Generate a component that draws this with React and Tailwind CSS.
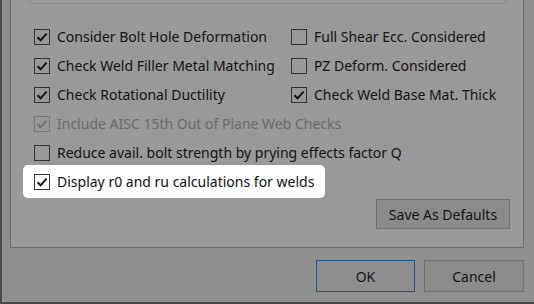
import React from 'react';

const font = { fontFamily: '"Noto Sans", "Open Sans", sans-serif' };

function Check({ on, disabled, bright }) {
  const border = disabled ? 'border-[#777]' : 'border-[#333]';
  const bg = bright ? 'bg-white' : 'bg-transparent';
  const stroke = disabled ? '#6f6f6f' : '#111';
  return (
    <div className={`w-[16px] h-[16px] border ${border} ${bg} flex items-center justify-center shrink-0`}>
      {on && (
        <svg width="12" height="12" viewBox="0 0 12 12">
          <path d="M1.5 6.2 L4.6 9.3 L10.6 2.6" fill="none" stroke={stroke} strokeWidth="2" />
        </svg>
      )}
    </div>
  );
}

function Row({ label, on, disabled }) {
  return (
    <div className="h-[29px] flex items-center gap-[7px]">
      <Check on={on} disabled={disabled} />
      <span className={`text-[14px] leading-none whitespace-nowrap ${disabled ? 'text-[#6a6a6a]' : 'text-[#141414]'}`}>{label}</span>
    </div>
  );
}

export default function App() {
  const left = [
    ['Consider Bolt Hole Deformation', true],
    ['Check Weld Filler Metal Matching', true],
    ['Check Rotational Ductility', true],
  ];
  const right = [
    ['Full Shear Ecc. Considered', false],
    ['PZ Deform. Considered', false],
    ['Check Weld Base Mat. Thick', true],
  ];

  return (
    <div style={font} className="w-[534px] h-[304px] bg-[#8f8f8f] border-l-2 border-b-2 border-[#4a4a4a] overflow-hidden">
      <div className="ml-[8px] w-[514px] h-[248px] border border-t-0 border-[#6c6c6c] bg-[#999999]">
        <div className="ml-[17px] w-[479px] h-[4px] border border-t-0 border-[#8a8a8a] rounded-b-[4px]" />
        <div className="pt-[18px] pl-[23px]">
          <div className="grid grid-cols-[257px_1fr]">
            <div>
              {left.map(([l, on]) => <Row key={l} label={l} on={on} />)}
            </div>
            <div>
              {right.map(([l, on]) => <Row key={l} label={l} on={on} />)}
            </div>
          </div>
          <Row label="Include AISC 15th Out of Plane Web Checks" on disabled />
          <Row label="Reduce avail. bolt strength by prying effects factor Q" on={false} />
          <div className="-ml-[11px] -my-[2px] w-[302px] h-[33px] pl-[11px] rounded-[5px] bg-white flex items-center gap-[7px]">
            <Check on bright />
            <span className="text-[14px] leading-none whitespace-nowrap text-[#111]">Display r0 and ru calculations for welds</span>
          </div>
        </div>
        <div className="flex justify-end pr-[13px] mt-[3px]">
          <div className="w-[134px] h-[30px] border border-[#6f6f6f] bg-[#8b8b8b] flex items-center justify-center text-[14px] text-[#141414]">
            Save As Defaults
          </div>
        </div>
      </div>
      <div className="flex justify-end gap-[9px] pr-[10px] mt-[12px]">
        <div className="w-[99px] h-[32px] border border-[#1f5689] bg-[#8e8e8e] flex items-center justify-center text-[14px] text-[#141414]">
          OK
        </div>
        <div className="w-[100px] h-[32px] border border-[#6f6f6f] bg-[#8b8b8b] flex items-center justify-center text-[14px] text-[#141414]">
          Cancel
        </div>
      </div>
    </div>
  );
}
